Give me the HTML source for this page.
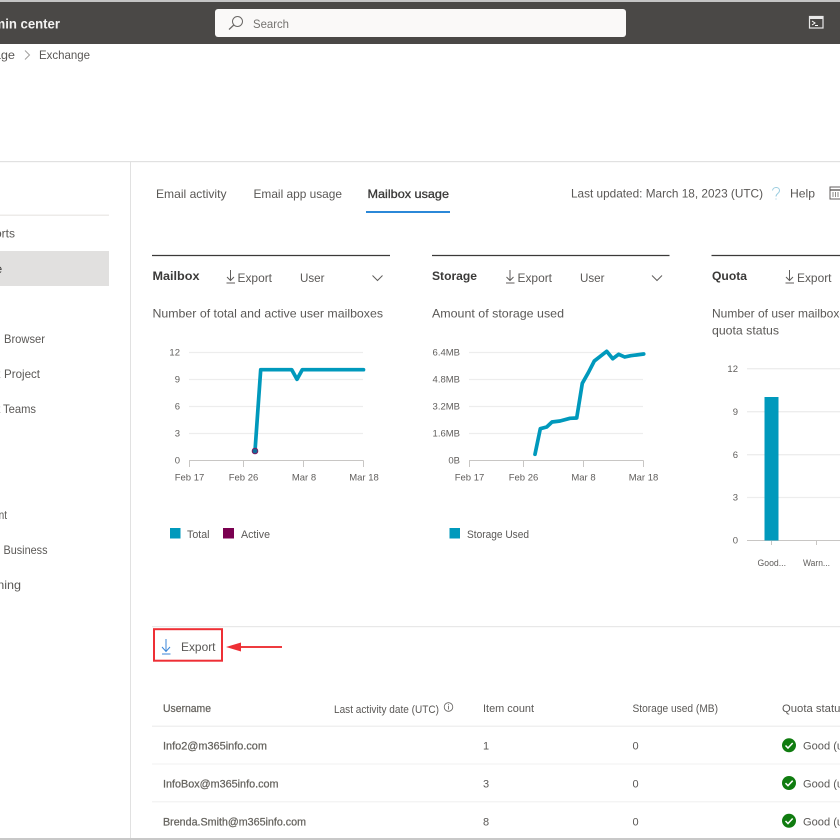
<!DOCTYPE html>
<html><head><meta charset="utf-8"><style>
html,body{margin:0;padding:0;background:#fff;width:840px;height:840px;overflow:hidden}
svg{display:block;filter:blur(.35px)}
text{font-family:"Liberation Sans",sans-serif;font-size:12px;fill:#5a5856}
.s{font-size:9.5px;fill:#605e5c}
.b{font-weight:bold;fill:#3b3a39}
.m{stroke:#66645f;stroke-width:.25px;fill:#66645f;font-size:11px}
.t{font-size:11px}
.g{stroke:#ededed;stroke-width:1.3;fill:none}
.a{stroke:#c8c6c4;stroke-width:1;fill:none}
.l{stroke:#0099bc;stroke-width:3.7;fill:none;stroke-linejoin:round;stroke-linecap:round}
.i{stroke:#605e5c;stroke-width:1;fill:none}
.h{stroke:#3b3a39;stroke-width:1.2}
</style></head><body>
<svg width="840" height="840" viewBox="0 0 840 840" xmlns="http://www.w3.org/2000/svg">
<rect width="840" height="840" fill="#fff"/>
<!-- top bar -->
<rect width="840" height="2" fill="#c4c4c4"/>
<rect y="2" width="840" height="42" fill="#4a4846"/>
<text x="-24" y="28.5" textLength="84" lengthAdjust="spacingAndGlyphs" style="font-size:13.5px;font-weight:bold;fill:#f3f2f1">Admin center</text>
<rect x="215" y="9" width="411" height="28" rx="3" fill="#faf9f8"/>
<circle cx="237.5" cy="21.5" r="5" fill="none" stroke="#6a6866" stroke-width="1"/>
<path d="M233.8 25 L229 29.5" stroke="#6a6866" stroke-width="1.2" fill="none"/>
<text x="253" y="28" textLength="36" lengthAdjust="spacingAndGlyphs" style="fill:#74726f">Search</text>
<rect x="809.5" y="16.5" width="13.5" height="11.5" fill="#4a4846" stroke="#e8e8e8" stroke-width="1.2"/>
<rect x="809.5" y="16.5" width="13.5" height="2.5" fill="#e8e8e8"/>
<path d="M812 21 L815 23 L812 25 M815 25.5 H818" stroke="#fff" stroke-width="1" fill="none"/>
<!-- breadcrumb -->
<text x="-31" y="59" textLength="46" lengthAdjust="spacingAndGlyphs">Manage</text>
<path d="M25 50.5 L29.5 55 L25 59.5" stroke="#a19f9d" stroke-width="1" fill="none"/>
<text x="39" y="59" textLength="51" lengthAdjust="spacingAndGlyphs">Exchange</text>
<!-- frames -->
<rect y="161" width="840" height="1.2" fill="#e1e1e1"/>
<rect x="130" y="162" width="1" height="676" fill="#e1e1e1"/>
<rect y="838" width="840" height="2" fill="#c8c8c8"/>
<!-- sidebar -->
<rect y="214.5" width="109" height="1.5" fill="#edebe9"/>
<text x="-27" y="237.5" textLength="42" lengthAdjust="spacingAndGlyphs">Reports</text>
<rect y="251" width="109" height="35" fill="#e1e0df"/>
<text x="-28" y="273" textLength="30" lengthAdjust="spacingAndGlyphs" style="fill:#323130">Usage</text>
<text x="-4" y="343" style="fill:#5a5856">t</text>
<text x="4" y="343" textLength="41" lengthAdjust="spacingAndGlyphs">Browser</text>
<text x="-3" y="378" style="fill:#5a5856">t</text>
<text x="4" y="378" textLength="36" lengthAdjust="spacingAndGlyphs">Project</text>
<text x="-3" y="413" style="fill:#5a5856">t</text>
<text x="3" y="413" textLength="33" lengthAdjust="spacingAndGlyphs">Teams</text>
<text x="-7" y="519" textLength="14" lengthAdjust="spacingAndGlyphs">ent</text>
<text x="3.5" y="554" textLength="44" lengthAdjust="spacingAndGlyphs">Business</text>
<text x="-7" y="589" textLength="28" lengthAdjust="spacingAndGlyphs">rning</text>
<!-- tabs -->
<text x="156" y="198" textLength="70.5" lengthAdjust="spacingAndGlyphs">Email activity</text>
<text x="253.5" y="198" textLength="88.5" lengthAdjust="spacingAndGlyphs">Email app usage</text>
<text x="367.5" y="198" textLength="81.5" lengthAdjust="spacingAndGlyphs" style="fill:#3b3a39;stroke:#3b3a39;stroke-width:.3px">Mailbox usage</text>
<rect x="366" y="211" width="84" height="2" fill="#2b88d8"/>
<text x="571" y="197.5" textLength="192" lengthAdjust="spacingAndGlyphs">Last updated: March 18, 2023 (UTC)</text>
<path d="M772.5 190.5 C773 186.5 779.5 186.5 779.5 190.5 C779.5 193.5 776 193.5 776 196.5 M776 198.5 V199.5" stroke="#9accdf" stroke-width="1" fill="none"/>
<text x="790" y="197.5" textLength="25" lengthAdjust="spacingAndGlyphs">Help</text>
<rect x="830" y="187" width="14" height="12" fill="none" stroke="#605e5c" stroke-width="1"/>
<path d="M830 190 H844" stroke="#605e5c" stroke-width="1.4"/>
<path d="M833 192 V197 M835.5 192 V197 M838 192 V197" stroke="#8a8886" stroke-width="1"/>
<!-- panel heads -->
<path class="h" d="M152 255.5 H390 M432 255.5 H669.5 M711.5 255.5 H840"/>
<text x="152.5" y="280" textLength="47" lengthAdjust="spacingAndGlyphs" class="b">Mailbox</text>
<path d="M230.5 270 V280 M227 277 L230.5 280.5 L234 277 M226.5 283 H235" stroke="#605e5c" fill="none"/>
<text x="237.5" y="282" textLength="34.5" lengthAdjust="spacingAndGlyphs">Export</text>
<text x="300" y="282" textLength="24.5" lengthAdjust="spacingAndGlyphs">User</text>
<path class="i" d="M372.5 275.5 L377.5 280.5 L382.5 275.5"/>
<text x="432" y="280" textLength="45" lengthAdjust="spacingAndGlyphs" class="b">Storage</text>
<path d="M510 270 V280 M506.5 277 L510 280.5 L513.5 277 M506 283 H514.5" stroke="#605e5c" fill="none"/>
<text x="517.5" y="282" textLength="34.5" lengthAdjust="spacingAndGlyphs">Export</text>
<text x="580" y="282" textLength="24.5" lengthAdjust="spacingAndGlyphs">User</text>
<path class="i" d="M652 275.5 L657 280.5 L662 275.5"/>
<text x="712" y="280" textLength="35" lengthAdjust="spacingAndGlyphs" class="b">Quota</text>
<path d="M789.5 270 V280 M786 277 L789.5 280.5 L793 277 M785.5 283 H794" stroke="#605e5c" fill="none"/>
<text x="797" y="282" textLength="34.5" lengthAdjust="spacingAndGlyphs">Export</text>
<text x="152.5" y="317.5" textLength="230.5" lengthAdjust="spacingAndGlyphs">Number of total and active user mailboxes</text>
<text x="432" y="317.5" textLength="132" lengthAdjust="spacingAndGlyphs">Amount of storage used</text>
<text x="712" y="317.5" textLength="156" lengthAdjust="spacingAndGlyphs">Number of user mailboxes by</text>
<text x="712" y="334.5" textLength="67" lengthAdjust="spacingAndGlyphs">quota status</text>
<!-- chart 1 -->
<path class="g" d="M189 352.5 H363 M189 379.5 H363 M189 406.5 H363 M189 433.5 H363"/>
<path class="a" d="M189 460.5 H363.5 M189.5 460.5 V467 M243.5 460.5 V467 M303.5 460.5 V467 M363.5 460.5 V467"/>
<g text-anchor="end">
<text class="s" x="180" y="355.5">12</text><text class="s" x="180" y="382.5">9</text><text class="s" x="180" y="409.5">6</text><text class="s" x="180" y="436.5">3</text><text class="s" x="180" y="463.5">0</text></g>
<g text-anchor="middle">
<text class="s" x="189.5" y="480.5">Feb 17</text><text class="s" x="243.5" y="480.5">Feb 26</text><text class="s" x="304" y="480.5">Mar 8</text><text class="s" x="364" y="480.5">Mar 18</text></g>
<path class="l" d="M255 451 L260.7 369.7 H291.7 L297 379.3 L302.3 369.7 H363.5"/>
<circle cx="255" cy="451" r="2.8" fill="#0f6d9a" stroke="#7a1f63" stroke-width="1"/>
<rect x="170" y="528" width="10.5" height="10.5" fill="#0099bc"/>
<text x="187" y="538" textLength="22.5" lengthAdjust="spacingAndGlyphs" class="t">Total</text>
<rect x="223" y="528" width="11" height="10.5" fill="#7a0050"/>
<text x="241" y="538" textLength="29" lengthAdjust="spacingAndGlyphs" class="t">Active</text>
<!-- chart 2 -->
<path class="g" d="M469 352.5 H643 M469 379.5 H643 M469 406.5 H643 M469 433.5 H643"/>
<path class="a" d="M469 460.5 H643.5 M469.5 460.5 V467 M523.5 460.5 V467 M583.5 460.5 V467 M643.5 460.5 V467"/>
<g text-anchor="end">
<text class="s" x="460" y="355.5">6.4MB</text><text class="s" x="460" y="382.5">4.8MB</text><text class="s" x="460" y="409.5">3.2MB</text><text class="s" x="460" y="436.5">1.6MB</text><text class="s" x="460" y="463.5">0B</text></g>
<g text-anchor="middle">
<text class="s" x="469.5" y="480.5">Feb 17</text><text class="s" x="523.5" y="480.5">Feb 26</text><text class="s" x="583.5" y="480.5">Mar 8</text><text class="s" x="643.5" y="480.5">Mar 18</text></g>
<path class="l" d="M535 454.3 L540.3 428.7 L546.7 427 L552 422 L560 421 L570 418.3 L576.7 418 L582.3 383.3 L588.3 372.7 L594.3 361 L600.3 356.3 L606.7 351.3 L612.7 358.7 L618.7 354.3 L624.7 357 L630.7 355.7 L643.7 354"/>
<rect x="449.5" y="528" width="10.5" height="10.5" fill="#0099bc"/>
<text x="467" y="538" textLength="62" lengthAdjust="spacingAndGlyphs" class="t">Storage Used</text>
<!-- chart 3 -->
<path class="g" d="M747 368.7 H840 M747 411.7 H840 M747 454.7 H840 M747 497.5 H840"/>
<path class="a" d="M747 540.5 H840 M771.5 540.5 V545 M816.5 540.5 V545"/>
<g text-anchor="end">
<text class="s" x="738" y="372">12</text><text class="s" x="738" y="415">9</text><text class="s" x="738" y="458">6</text><text class="s" x="738" y="500.5">3</text><text class="s" x="738" y="543.5">0</text></g>
<rect x="764.5" y="397" width="14" height="143.5" fill="#0099bc"/>
<text class="s" x="757.5" y="566" textLength="28.5" lengthAdjust="spacingAndGlyphs">Good...</text>
<text class="s" x="803" y="566" textLength="27" lengthAdjust="spacingAndGlyphs">Warn...</text>
<!-- table -->
<rect x="152" y="626" width="688" height="1.2" fill="#e8e8e8"/>
<rect x="154" y="629.2" width="68" height="31.5" fill="#fff" stroke="#ee2f35" stroke-width="2"/>
<path d="M166 639 V651 M162 647 L166 651.5 L170 647" stroke="#3a86d8" fill="none" stroke-width="1"/>
<path d="M162 654 H170.5" stroke="#3a86d8" stroke-width="1"/>
<text x="181" y="651" textLength="34.5" lengthAdjust="spacingAndGlyphs">Export</text>
<path d="M236 647 H282" stroke="#ee3b3f" stroke-width="2"/>
<path d="M226 647 L241 642.5 V651.5 Z" fill="#ee2f35"/>
<text x="163" y="712" textLength="48" lengthAdjust="spacingAndGlyphs" class="m">Username</text>
<text x="334" y="713" textLength="105" lengthAdjust="spacingAndGlyphs" class="t">Last activity date (UTC)</text>
<circle cx="448.5" cy="707" r="4.3" fill="none" stroke="#605e5c" stroke-width=".8"/>
<path d="M448.5 706 V709.5 M448.5 704.3 V705.2" stroke="#605e5c" stroke-width=".8"/>
<text x="483" y="712" textLength="51" lengthAdjust="spacingAndGlyphs" class="t">Item count</text>
<text x="632.5" y="712" textLength="85.5" lengthAdjust="spacingAndGlyphs" class="t">Storage used (MB)</text>
<text x="782" y="712" textLength="64" lengthAdjust="spacingAndGlyphs" class="t">Quota status</text>
<rect x="152" y="725.5" width="688" height="1.5" fill="#f0f0f0"/>
<rect x="152" y="763.5" width="688" height="1" fill="#f0f0f0"/>
<rect x="152" y="801.3" width="688" height="1" fill="#f0f0f0"/>
<text x="163" y="749.5" textLength="104" lengthAdjust="spacingAndGlyphs" class="m">Info2@m365info.com</text>
<text x="163" y="787.5" textLength="115.5" lengthAdjust="spacingAndGlyphs" class="m">InfoBox@m365info.com</text>
<text x="163" y="825.5" textLength="143" lengthAdjust="spacingAndGlyphs" class="m">Brenda.Smith@m365info.com</text>
<text x="483" y="749.5" class="t">1</text><text x="483" y="787.5" class="t">3</text><text x="483" y="825.5" class="t">8</text>
<text x="632.5" y="749.5" class="t">0</text><text x="632.5" y="787.5" class="t">0</text><text x="632.5" y="825.5" class="t">0</text>
<text x="803" y="749.5" textLength="66" lengthAdjust="spacingAndGlyphs" class="t">Good (under)</text>
<text x="803" y="787.5" textLength="66" lengthAdjust="spacingAndGlyphs" class="t">Good (under)</text>
<text x="803" y="825.5" textLength="66" lengthAdjust="spacingAndGlyphs" class="t">Good (under)</text>
<circle cx="789" cy="745.3" r="7" fill="#107c10"/><path d="M785.5 745.5 L788 748 L792.7 743" stroke="#fff" stroke-width="1.5" fill="none"/>
<circle cx="789" cy="783" r="7" fill="#107c10"/><path d="M785.5 783.2 L788 785.7 L792.7 780.7" stroke="#fff" stroke-width="1.5" fill="none"/>
<circle cx="789" cy="820.8" r="7" fill="#107c10"/><path d="M785.5 821 L788 823.5 L792.7 818.5" stroke="#fff" stroke-width="1.5" fill="none"/>
</svg>
</body></html>
